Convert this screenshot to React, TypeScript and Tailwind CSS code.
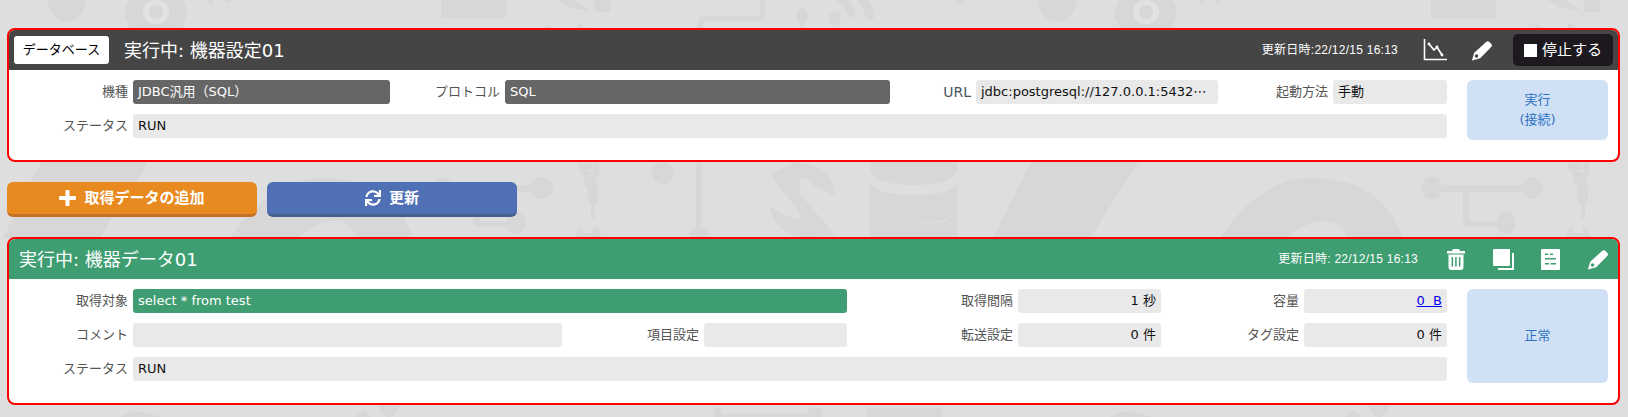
import React from "react";
import { FaSync } from "react-icons/fa";

const FONT = "font-['DejaVu_Sans','Noto_Sans_CJK_JP',sans-serif]";

function Backdrop() {
  return (
    <svg className="absolute inset-0 w-full h-full" aria-hidden="true">
      <defs>
        <pattern id="tile" x="0" y="0" width="990" height="417" patternUnits="userSpaceOnUse">
          <g fill="#d7d7d7">
            <ellipse cx="67" cy="0" rx="19" ry="22" />
            <path d="M129 0h54l3 8v9l-3 8v3h-54v-3l-4-8v-9z" />
            <ellipse cx="156" cy="12" rx="13" ry="12" fill="#e2e2e2" />
            <ellipse cx="156" cy="12" rx="7" ry="7" />
            <path d="M207 0h7l-3 4zM224 0h8l-5 4z" />
            <path d="M441 0h65v18h-65z" />
            <path d="M558 0h18l18 14v-14h16v12l-14 0-26-4zM545 24l8 4h-8zM578 22l8 6h-8z" />
            <path d="M760 0h5v14q0 7-7 7h-50q-5 0-5 5v2h-6v-3q0-9 9-9h50q4 0 4-4z" />
            <ellipse cx="802" cy="16" rx="6" ry="8" />
            <path d="M800 22h4v6h-4z" />
            <ellipse cx="835" cy="18" rx="6" ry="7" />
            <path d="M836 0h12q5 5 7 12q1 4-3 5t-5-3q-2-7-11-14zM858 0h11q4 6 5 16q0 4-4 4t-5-3q-1-9-7-17z" />
            <ellipse cx="959" cy="0" rx="5" ry="4" />
            <path d="M578 163h15v7h-15z" />

            {/* large slash */}
            <path d="M42 160h108l-50 78h-97z" />
            {/* dome */}
            <path fillRule="evenodd" d="M230 238q40-60 92-60q70 0 91 60h-56q-6-17-23-17q-18 0-36 17z" />
            {/* connector */}
            <ellipse cx="442" cy="188" rx="11" ry="11" />
            <ellipse cx="542" cy="188" rx="11" ry="11" />
            <path d="M442 185h100v7h-63v25q0 4 4 4h23v6h-27q-6 0-6-6v-29h-31z" />
            <ellipse cx="516" cy="223" rx="10" ry="11" />
            {/* wrench */}
            <path d="M583 160h5v12h6v-12h5v16l-3 3v5l3 3h-1v15l-3 1v15h-4v-15h-3l-1-15-3-4v-8l-3-3z" />
            <path d="M576 238l2-10 4-2 2 7 8 0 2-7 4 2 4 10z" />
            <ellipse cx="663" cy="173" rx="11" ry="11" />
            <path d="M696 160h6v66h-6z" />
            <ellipse cx="699" cy="234" rx="10" ry="8" />
            {/* sync */}
            <path d="M770 174l25-12q38 2 40 34l-22-10q-3-8-13-8v36z" />
            <path d="M770 205q10 12 30 14v-25l35 41-25 3q-38-3-40-33z" />
            {/* database */}
            <path d="M870 160h87v10q-4 15-43 15t-44-15z" />
            <path d="M870 182q5 13 44 13t43-13v28q-4 13-43 13t-44-13z" />
            <path d="M870 210q5 10 44 13t43-13v28h-87z" />
            {/* lower band */}
            <path d="M714 417v-6q0-4 4-4t4 3v4h86v-3q0-4 7-4t7 4v6z" />
            <path d="M867 407h75v10h-75z" />
            <path d="M120 417q10-6 20-5t22 5z" />
            <path d="M355 417l8-7 8 7z" />
            <ellipse cx="389" cy="402" rx="11" ry="15" />
          </g>
        </pattern>
      </defs>
      <rect width="100%" height="100%" fill="url(#tile)" />
    </svg>
  );
}

function Pencil({ hole }: { hole: string }) {
  return (
    <svg width="22" height="22" viewBox="0 0 24 24" aria-hidden="true">
      <path fill="#fff" d="M1 23.5 3.5 15 16.5 3.2q1.7-1.5 3.3-.2l2.5 2.4q1.3 1.6-.2 3.2L10 21z" />
      <circle cx="6" cy="18.6" r="1.9" fill={hole} />
    </svg>
  );
}

function Chart() {
  return (
    <svg width="24" height="22" viewBox="0 0 24 22" aria-hidden="true" fill="none" stroke="#fff">
      <path d="M1.5 0v20.5H24" strokeWidth="1.6" />
      <path d="M6 5l5 6 3-3 5 8" strokeWidth="1.7" />
      <circle cx="6" cy="5" r="1.4" fill="#fff" stroke="none" />
      <circle cx="14" cy="8" r="1.4" fill="#fff" stroke="none" />
      <circle cx="19" cy="16" r="1.4" fill="#fff" stroke="none" />
    </svg>
  );
}

function Trash() {
  return (
    <svg width="18" height="21" viewBox="0 0 18 21" aria-hidden="true">
      <path fill="#fff" d="M6 0h6l1 2h5v2.5H0V2h5zM1.5 5.5h15V18q0 3-3 3h-9q-3 0-3-3z" />
      <path fill="#3e9e72" d="M4.6 8h1.5v9.5H4.6zM8.2 8h1.500v9.500H8.200zM11.900 8h1.500v9.500h-1.500z" />
    </svg>
  );
}

function Copy() {
  return (
    <svg width="21" height="21" viewBox="0 0 21 21" aria-hidden="true">
      <rect x="0" y="0" width="17" height="17" rx="1" fill="#fff" />
      <path fill="#fff" d="M19 4h2v17H5v-2h14z" />
    </svg>
  );
}

function Sheet() {
  return (
    <svg width="19" height="21" viewBox="0 0 19 21" aria-hidden="true">
      <rect width="19" height="21" rx="1" fill="#fff" />
      <path fill="#3e9e72" d="M4 4.500h3v1.400H4zM9 4.500h3v1.400H9zM4 9h11v1.400H4zM4 14h4v1.400H4zM9.500 14H15v1.400H9.500z" />
    </svg>
  );
}

function Plus() {
  return (
    <svg width="17" height="16" viewBox="0 0 17 16" aria-hidden="true">
      <path fill="#fff" d="M6.500 1q0-1 1-1h2q1 0 1 1v5H16q1 0 1 1v2q0 1-1 1h-5.500v5q0 1-1 1h-2q-1 0-1-1v-5H1q-1 0-1-1V7q0-1 1-1h5.500z" />
    </svg>
  );
}

function Label({ w, children }: { w: string; children?: React.ReactNode }) {
  return <div className={`${w} shrink-0 pr-[5px] text-right text-[13px] leading-[24px] text-[#555555]`}>{children}</div>;
}

function Field({
  w,
  tone = "bg-[#e9e9e9] text-[#111111]",
  right,
  children,
}: {
  w: string;
  tone?: string;
  right?: boolean;
  children?: React.ReactNode;
}) {
  return (
    <div
      className={`${w} ${tone} h-6 shrink-0 overflow-hidden whitespace-nowrap rounded-[3px] px-[5px] text-[13px] leading-[24px] ${right ? "text-right" : ""}`}
    >
      {children}
    </div>
  );
}

function Row({ children }: { children: React.ReactNode }) {
  return <div className="flex h-6">{children}</div>;
}

function SideButton({ h, children }: { h: string; children: React.ReactNode }) {
  return (
    <div
      className={`${h} flex w-[141px] shrink-0 flex-col items-center justify-center rounded-md bg-[#d0e0f5] text-[13px] leading-[20px] text-[#2e72c4]`}
    >
      {children}
    </div>
  );
}

export default function App() {
  return (
    <div className={`${FONT} relative h-[417px] w-[1628px] overflow-hidden bg-[#dedede]`}>
      <Backdrop />
      <div className="relative pl-[7px] pr-2 pt-7">
        {/* device panel */}
        <section className="overflow-hidden rounded-lg border-2 border-[#ff0000] bg-white">
          <header className="flex h-10 items-center bg-[#454545] text-white">
            <div className="ml-[5px] flex h-7 w-[95px] items-center justify-center rounded-[3px] bg-white text-[13px] text-black">
              データベース
            </div>
            <div className="ml-[15px] text-[18px]">実行中: 機器設定01</div>
            <div className="ml-auto text-[12px] tracking-[0.25px] font-['Liberation_Sans','Noto_Sans_CJK_JP',sans-serif]">更新日時:22/12/15 16:13</div>
            <div className="ml-[25px] flex"><Chart /></div>
            <div className="ml-6 flex"><Pencil hole="#454545" /></div>
            <div className="ml-5 mr-[5px] flex h-8 w-[100px] items-center rounded-[5px] bg-[#1e191f] pl-[11px] text-[15px]">
              <span className="h-[13px] w-[13px] bg-white" />
              <span className="ml-[5px]">停止する</span>
            </div>
          </header>
          <div className="flex items-start pb-5 pt-[10px]">
            <div className="flex w-[1438px] shrink-0 flex-col gap-[10px]">
              <Row>
                <Label w="w-[124px]">機種</Label>
                <Field w="w-[257px]" tone="bg-[#666666] text-white">JDBC汎用（SQL）</Field>
                <Label w="w-[115px]">プロトコル</Label>
                <Field w="w-[385px]" tone="bg-[#666666] text-white">SQL</Field>
                <Label w="w-[86px]"><span className="text-[14px] text-[#4a5560]">URL</span></Label>
                <Field w="w-[242px]">jdbc:postgresql://127.0.0.1:5432⋯</Field>
                <Label w="w-[115px]">起動方法</Label>
                <Field w="w-[114px]">手動</Field>
              </Row>
              <Row>
                <Label w="w-[124px]">ステータス</Label>
                <Field w="flex-1">RUN</Field>
              </Row>
            </div>
            <div className="ml-5">
              <SideButton h="h-[60px]">
                <span>実行</span>
                <span>(接続)</span>
              </SideButton>
            </div>
          </div>
        </section>

        {/* actions */}
        <div className="mt-5 flex gap-[10px]">
          <button className="flex h-[35px] w-[250px] items-center justify-center gap-2 rounded-md border-b-[3px] border-[#c47027] bg-[#e98a21] text-[15px] font-bold text-white">
            <Plus />
            <span>取得データの追加</span>
          </button>
          <button className="flex h-[35px] w-[250px] items-center justify-center gap-2 rounded-md border-b-[3px] border-[#45608f] bg-[#4f70b5] text-[15px] font-bold text-white">
            <FaSync size={16} />
            <span>更新</span>
          </button>
        </div>

        {/* data panel */}
        <section className="mt-5 overflow-hidden rounded-lg border-2 border-[#ff0000] bg-white">
          <header className="flex h-10 items-center bg-[#3e9e72] text-white">
            <div className="ml-[10px] text-[18px]">実行中: 機器データ01</div>
            <div className="ml-auto text-[12px] tracking-[0.25px] font-['Liberation_Sans','Noto_Sans_CJK_JP',sans-serif]">更新日時: 22/12/15 16:13</div>
            <div className="ml-[29px] flex"><Trash /></div>
            <div className="ml-7 flex"><Copy /></div>
            <div className="ml-[27px] flex"><Sheet /></div>
            <div className="ml-[27px] mr-[9px] flex"><Pencil hole="#3e9e72" /></div>
          </header>
          <div className="flex items-start pb-5 pt-[10px]">
            <div className="flex w-[1438px] shrink-0 flex-col gap-[10px]">
              <Row>
                <Label w="w-[124px]">取得対象</Label>
                <Field w="w-[714px]" tone="bg-[#3e9e72] text-white">select * from test</Field>
                <Label w="w-[171px]">取得間隔</Label>
                <Field w="w-[143px]" right>1 秒</Field>
                <Label w="w-[143px]">容量</Label>
                <Field w="w-[143px]" right><span className="text-[#0000ee] underline">0&nbsp;&nbsp;B</span></Field>
              </Row>
              <Row>
                <Label w="w-[124px]">コメント</Label>
                <Field w="w-[429px]" />
                <Label w="w-[142px]">項目設定</Label>
                <Field w="w-[143px]" />
                <Label w="w-[171px]">転送設定</Label>
                <Field w="w-[143px]" right>0 件</Field>
                <Label w="w-[143px]">タグ設定</Label>
                <Field w="w-[143px]" right>0 件</Field>
              </Row>
              <Row>
                <Label w="w-[124px]">ステータス</Label>
                <Field w="flex-1">RUN</Field>
              </Row>
            </div>
            <div className="ml-5">
              <SideButton h="h-[94px]">正常</SideButton>
            </div>
          </div>
        </section>
      </div>
    </div>
  );
}
